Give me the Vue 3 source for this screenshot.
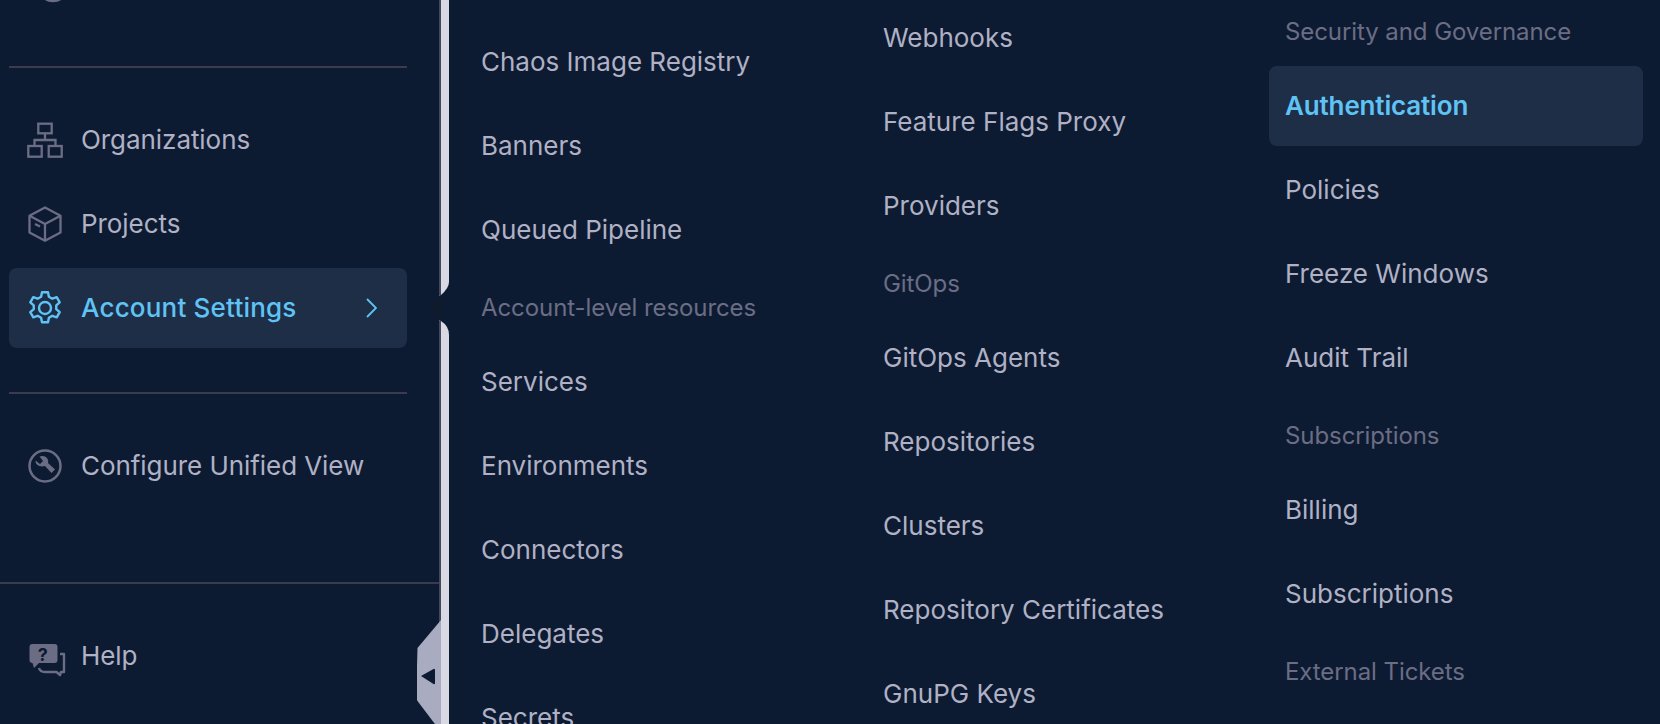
<script setup>
const columns = [
  { key: 'a', items: [
    { t: 'Chaos Image Registry' }, { t: 'Banners' }, { t: 'Queued Pipeline' },
    { t: 'Account-level resources', h: true },
    { t: 'Services' }, { t: 'Environments' }, { t: 'Connectors' }, { t: 'Delegates' }, { t: 'Secrets' }
  ] },
  { key: 'b', items: [
    { t: 'Webhooks' }, { t: 'Feature Flags Proxy' }, { t: 'Providers' },
    { t: 'GitOps', h: true },
    { t: 'GitOps Agents' }, { t: 'Repositories' }, { t: 'Clusters' }, { t: 'Repository Certificates' }, { t: 'GnuPG Keys' }
  ] },
  { key: 'c', items: [
    { t: 'Security and Governance', h: true },
    { t: 'Authentication', active: true }, { t: 'Policies' }, { t: 'Freeze Windows' }, { t: 'Audit Trail' },
    { t: 'Subscriptions', h: true },
    { t: 'Billing' }, { t: 'Subscriptions' },
    { t: 'External Tickets', h: true }
  ] }
]
</script>

<template>
  <div class="page">
    <aside class="sidebar">
      <div class="nav-top">
        <div class="stub">
          <svg class="icon" viewBox="0 0 36 36"><circle cx="26" cy="18" r="15" fill="none" stroke="#6b6d85" stroke-width="2.500" /></svg>
        </div>
        <hr class="rule rule-first" />
        <nav class="rows">
          <a class="row">
            <svg class="icon" viewBox="0 0 36 36" fill="none" stroke="#6b6d85" stroke-width="2.300">
              <rect x="11.300" y="1.700" width="13.400" height="9.600" />
              <path d="M18 11.300V18M7.500 24v-6h21v6" />
              <rect x="1.300" y="24" width="13.400" height="10.700" />
              <rect x="21.700" y="24" width="13" height="10.700" />
            </svg>
            <span>Organizations</span>
          </a>
          <a class="row">
            <svg class="icon" viewBox="0 0 36 36" fill="none" stroke="#6b6d85" stroke-width="2.300" stroke-linejoin="round">
              <path d="M18 1.500 33.500 9.800V26.500L18 34.800 2.500 26.500V9.800Z" />
              <path d="M2.500 9.800 18 18l15.500-8.200M18 18v16.800" />
              <path d="M8 18l5 2.500" />
            </svg>
            <span>Projects</span>
          </a>
          <a class="row row-active">
            <svg class="icon" viewBox="0 0 24 24" fill="none" stroke="#5fc4f5" stroke-width="1.600" stroke-linejoin="round">
              <path d="M10 1.500h4l.6 3 2.300 1.300 2.900-1 2 3.400-2.300 2v2.600l2.300 2-2 3.400-2.900-1-2.300 1.300-.6 3h-4l-.6-3-2.300-1.300-2.900 1-2-3.400 2.300-2v-2.600l-2.300-2 2-3.400 2.900 1 2.300-1.300z" />
              <circle cx="12" cy="12" r="4" />
            </svg>
            <span>Account Settings</span>
            <svg class="chevron" viewBox="0 0 11 20" fill="none" stroke="#5fc4f5" stroke-width="1.800"><path d="M1 1l9 9-9 9" /></svg>
          </a>
        </nav>
        <hr class="rule rule-second" />
        <a class="row row-config">
          <svg class="icon" viewBox="0 0 36 36" fill="none">
            <circle cx="18" cy="18" r="15.500" stroke="#6b6d85" stroke-width="2.500" />
            <path d="M8.500 12.500l4.500 3.500 3-3-3.500-4.500c3.500-1.500 7.500 0 8.500 3.500.3 1.200.3 2 0 3l7 6.500-3.500 3.500-6.500-7c-4.500 1.500-10-1-9.500-5.500z" fill="#6b6d85" />
          </svg>
          <span>Configure Unified View</span>
        </a>
      </div>
      <div class="nav-bottom">
        <a class="row">
          <svg class="icon icon-help" viewBox="0 0 36 36">
            <path d="M5.500 6h22a3 3 0 0 1 3 3v13a3 3 0 0 1-3 3H12l-5 5-1.500-5a3 3 0 0 1-3-3V9a3 3 0 0 1 3-3z" fill="#6b6d85" />
            <text x="15.700" y="23" text-anchor="middle" class="qm">?</text>
            <path d="M33 16h4v18h-3l-1 3-3.500-3H18q-5 0-6-4" fill="none" stroke="#6b6d85" stroke-width="2.400" stroke-linejoin="round" />
          </svg>
          <span>Help</span>
        </a>
      </div>
      <div class="handle">
        <svg viewBox="0 0 24 124" width="24" height="124">
          <path d="M24 0 .5 28 0 46v34l.5 1L24 112Z" fill="#a9abc0" />
          <path d="M4 56 16.500 49a1 1 0 0 1 1.500 1V63a1 1 0 0 1-1.500 1Z" fill="#0d1b32" />
        </svg>
      </div>
      <div class="notch"></div>
    </aside>
    <svg class="divider" viewBox="0 0 10 724" width="10" height="724" aria-hidden="true">
      <path d="M0 0h10v282q0 6-8 13l-2 1Z" fill="#d8d9e3" />
      <path d="M0 0h2v295l-2 1Z" fill="#45475c" />
      <path d="M0 320l2 1q8 5 8 14v389H0Z" fill="#d8d9e3" />
      <path d="M0 320l2 1v403H0Z" fill="#45475c" />
    </svg>
    <main class="menu">
      <section v-for="col in columns" :key="col.key" class="column" :class="`column-${col.key}`">
        <template v-for="item in col.items" :key="item.t + !!item.h">
          <h4 v-if="item.h" class="heading">{{ item.t }}</h4>
          <a v-else class="item" :class="{ 'item-active': item.active }">{{ item.t }}</a>
        </template>
      </section>
    </main>
  </div>
</template>

<style>
html, body { margin: 0; background: #0d1b32; overflow: hidden; }
</style>

<style scoped>
.page {
  display: flex;
  width: 1660px;
  height: 724px;
  overflow: hidden;
  background: #0d1b32;
  font-family: Inter, "Noto Sans", sans-serif;
  font-size: 26px;
  color: #b0b1c4;
}
.sidebar {
  position: relative;
  flex: 0 0 439px;
  height: 724px;
  display: flex;
  flex-direction: column;
  justify-content: space-between;
  box-sizing: border-box;
}
.nav-top { padding: 0 32px 0 9px; }
.stub {
  height: 80px;
  margin-top: -54px;
  display: flex;
  align-items: center;
  padding-left: 18px;
}
.rule { border: 0; height: 2px; background: #3a3c4d; margin: 0; }
.rule-first { margin-top: 40px; }
.rule-second { margin-top: 44px; }
.rows { display: flex; flex-direction: column; gap: 4px; margin-top: 32px; }
.row {
  display: flex;
  align-items: center;
  height: 80px;
  padding-left: 18px;
  gap: 18px;
  border-radius: 8px;
  box-sizing: border-box;
  letter-spacing: -0.06px;
}
.row span { margin-top: -2px; }
.icon { width: 36px; height: 36px; flex: none; display: block; }
.icon-help { overflow: visible; }
.row-active {
  background: #1f2e47;
  color: #5fc4f5;
  font-weight: 500;
  letter-spacing: 0.2px;
}
.chevron { width: 11px; height: 20px; margin-left: auto; margin-right: 30px; }
.row-config { margin-top: 32px; }
.nav-bottom {
  border-top: 2px solid #3a3c4d;
  padding: 32px 32px 28px 9px;
}
.qm { font: 700 18px Inter, sans-serif; fill: #0d1b32; }
.handle {
  position: absolute;
  right: -2px;
  top: 620px;
  width: 24px;
  height: 124px;
}
.handle svg { display: block; }
.notch {
  position: absolute;
  right: -2px;
  top: 295px;
  width: 11px;
  height: 26px;
  background: #0f1a2c;
  clip-path: polygon(100% 0, 0 50%, 100% 100%);
}
.divider { flex: none; display: block; }
.menu {
  flex: 1;
  display: flex;
  gap: 28px;
  padding: 0 17px 0 16px;
  overflow: hidden;
}
.column {
  flex: 0 0 374px;
  display: flex;
  flex-direction: column;
  gap: 4px;
}
.column-a { margin-top: 21px; }
.column-b { margin-top: -3px; }
.column-c { margin-top: -2px; }
.item {
  height: 80px;
  flex: none;
  display: flex;
  align-items: center;
  padding-left: 16px;
  border-radius: 8px;
  box-sizing: border-box;
}
.column-c .item { padding-bottom: 2px; }
.item-active {
  background: #1f2e47;
  color: #5fc4f5;
  font-weight: 600;
  letter-spacing: -0.15px;
}
.heading {
  margin: 0;
  height: 64px;
  flex: none;
  display: flex;
  align-items: center;
  padding: 5px 0 0 16px;
  box-sizing: border-box;
  font-size: 24px;
  font-weight: 400;
  letter-spacing: -0.08px;
  color: #6b6d85;
}
.column-c .heading { padding-top: 3px; }
</style>
